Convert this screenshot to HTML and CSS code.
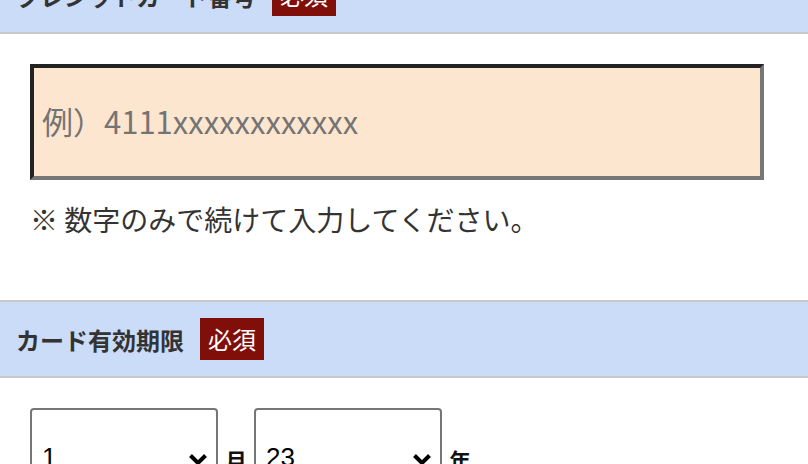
FILE: index.html
```html
<!DOCTYPE html>
<html lang="ja">
<head>
<meta charset="utf-8">
<title>カード情報入力</title>
<link rel="stylesheet" href="styles.css">
</head>
<body>
<div class="page">
  <div class="field-head">
    <span class="field-title">クレジットカード番号</span>
    <span class="badge">必須</span>
  </div>
  <div class="field-body">
    <input class="card-input" type="text" placeholder="例）4111xxxxxxxxxxxx">
    <p class="hint">※ 数字のみで続けて入力してください。</p>
  </div>
  <div class="field-head">
    <span class="field-title">カード有効期限</span>
    <span class="badge">必須</span>
  </div>
  <div class="expiry">
    <div class="select-wrap">
      <select class="sel"><option>1</option></select>
      <svg class="chev" width="20" height="14" viewBox="0 0 20 14"><polyline points="2.5,2.5 10,10 17.5,2.5" fill="none" stroke="#000" stroke-width="4"/></svg>
    </div>
    <span class="unit">月</span>
    <div class="select-wrap">
      <select class="sel"><option>23</option></select>
      <svg class="chev" width="20" height="14" viewBox="0 0 20 14"><polyline points="2.5,2.5 10,10 17.5,2.5" fill="none" stroke="#000" stroke-width="4"/></svg>
    </div>
    <span class="unit">年</span>
  </div>
</div>
</body>
</html>
```
FILE: styles.css
```css
html, body {
  margin: 0;
  padding: 0;
  background: #fff;
  overflow: hidden;
}
body {
  font-family: "Noto Sans CJK JP", sans-serif;
  color: #333;
}
.page {
  margin-top: -44px;
}
.field-head {
  display: flex;
  align-items: center;
  gap: 16px;
  height: 74px;
  padding-left: 16px;
  background: #cadcf8;
  border-top: 2px solid #c8c8c8;
  border-bottom: 2px solid #c8c8c8;
}
.field-title {
  font-size: 24px;
  font-weight: bold;
  color: #333;
}
.badge {
  display: inline-block;
  background: #800f0a;
  color: #fff;
  font-size: 24px;
  line-height: 42px;
  height: 42px;
  padding: 0 8px;
}
.field-body {
  padding: 30px 30px 0;
  height: 236px;
}
.card-input {
  display: block;
  box-sizing: border-box;
  width: 734px;
  height: 116px;
  margin: 0;
  padding: 0 8px 4px;
  border: 4px solid;
  border-color: #222 #777 #777 #222;
  background: #fde6cf;
  font-family: "Noto Sans CJK JP", sans-serif;
  font-size: 31px;
  color: #333;
  outline: none;
}
.card-input::placeholder {
  color: #747474;
}
.hint {
  margin: 19px 0 0;
  font-size: 28px;
  line-height: 40px;
  color: #333;
}
.expiry {
  display: flex;
  align-items: center;
  gap: 7px;
  padding: 30px 30px 0;
}
.select-wrap {
  position: relative;
}
.sel {
  display: block;
  box-sizing: border-box;
  width: 188px;
  height: 102px;
  margin: 0;
  padding: 0 0 4px 10px;
  border: 2px solid #767676;
  border-radius: 4px;
  background: #fff;
  -webkit-appearance: none;
  appearance: none;
  font-family: "Liberation Sans", sans-serif;
  font-size: 26px;
  color: #000;
}
.chev {
  position: absolute;
  right: 10px;
  top: 45px;
}
.unit {
  font-size: 22px;
  font-weight: bold;
  color: #111;
}
```
